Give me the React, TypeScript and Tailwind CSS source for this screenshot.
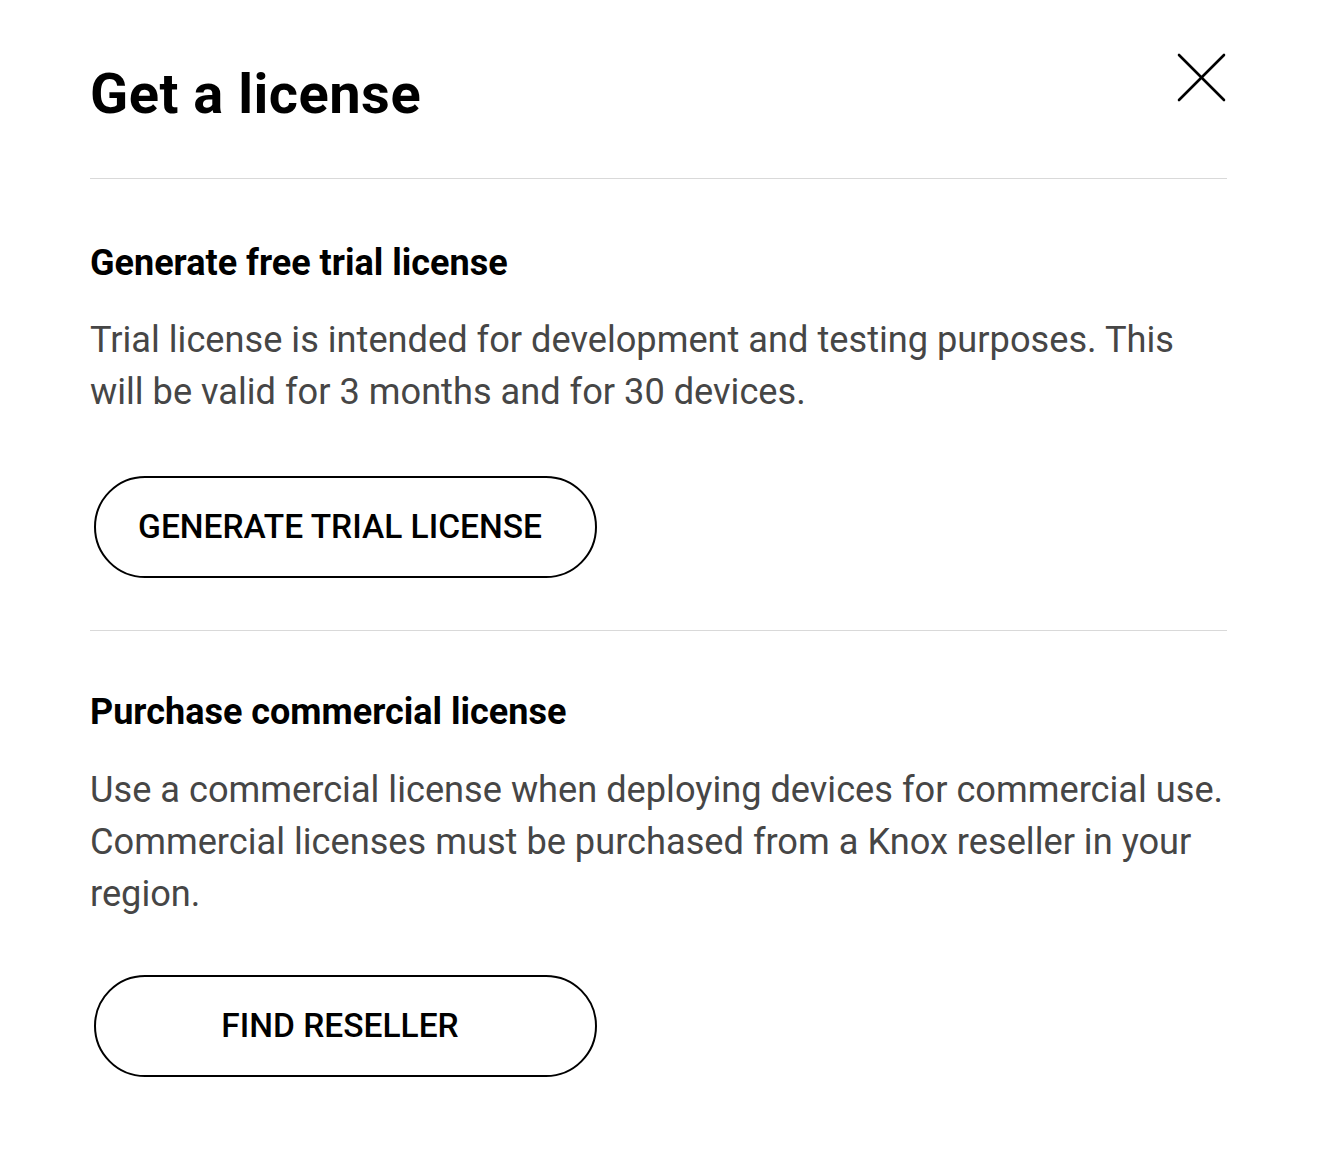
interface Section {
  title: string;
  body: string;
  action: string;
  headingGap: string;
  bodyGap: string;
  buttonGap: string;
}

const sections: Section[] = [
  {
    title: 'Generate free trial license',
    body: 'Trial license is intended for development and testing purposes. This will be valid for 3 months and for 30 devices.',
    action: 'GENERATE TRIAL LICENSE',
    headingGap: 'mt-[64px]',
    bodyGap: 'mt-[31px]',
    buttonGap: 'mt-[58px]',
  },
  {
    title: 'Purchase commercial license',
    body: 'Use a commercial license when deploying devices for commercial use. Commercial licenses must be purchased from a Knox reseller in your region.',
    action: 'FIND RESELLER',
    headingGap: 'mt-[61px]',
    bodyGap: 'mt-[32px]',
    buttonGap: 'mt-[55px]',
  },
];

const CloseIcon = () => (
  <svg width="50" height="50" viewBox="0 0 50 50" fill="none" stroke="currentColor" strokeWidth="2.6" strokeLinecap="round">
    <path d="M2 2L47 47" />
    <path d="M47 2L2 47" />
  </svg>
);

const App = () => {
  return (
    <div className="min-h-screen bg-white font-['Roboto',sans-serif] text-black">
      <div className="pl-[90px] pr-[92px] pt-[66px] pb-[72px]">
        {/* Header */}
        <div className="flex items-start justify-between">
          <h1 className="text-[56px] leading-[56px] font-bold tracking-[0.5px]">Get a license</h1>
          <button aria-label="Close" className="-mt-[13px] text-black">
            <CloseIcon />
          </button>
        </div>

        {sections.map((s, i) => (
          <div key={s.title} className={i === 0 ? 'mt-[56px]' : ''}>
            <div className="h-px bg-[#d9d9d9]" />
            <h2 className={`${s.headingGap} text-[36px] leading-[40px] font-bold`}>{s.title}</h2>
            <p className={`${s.bodyGap} text-[36.2px] leading-[52px] text-[#464646]`}>{s.body}</p>
            <button
              className={`${s.buttonGap} ml-[4px] mb-[52px] h-[102px] w-[503px] rounded-full border-2 border-black pr-[11px] text-[33.5px] font-medium`}
            >
              {s.action}
            </button>
          </div>
        ))}
      </div>
    </div>
  );
};

export default App;
